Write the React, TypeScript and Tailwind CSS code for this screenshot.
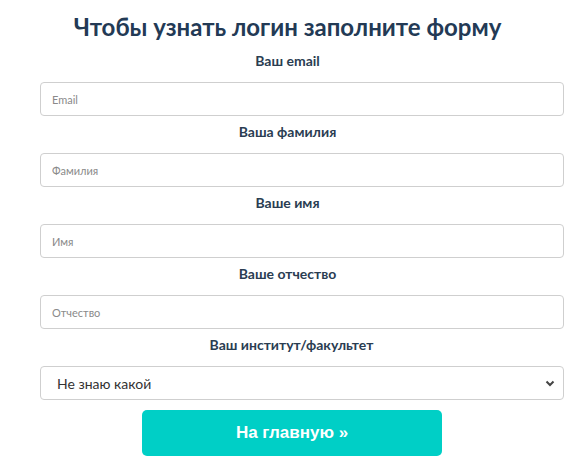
import React from "react";

const Label = ({ children, className = "" }: { children: React.ReactNode; className?: string }) => (
  <div className={`text-center text-[14px] leading-[20px] font-bold text-[#2a3d52] ${className}`}>{children}</div>
);

const Field = ({ placeholder, className = "" }: { placeholder: string; className?: string }) => (
  <input
    placeholder={placeholder}
    className={`block ml-[40px] w-[524px] h-[34px] rounded-[4px] border border-[#cfcfcf] bg-white px-[11px] text-[11px] text-[#555] placeholder:text-[#8a8a8a] outline-none ${className}`}
  />
);

export default function App() {
  return (
    <div className="w-[583px] h-[468px] bg-white overflow-hidden" style={{ fontFamily: "Lato, 'Noto Sans', sans-serif" }}>
      <h1 className="pt-[11px] text-center text-[24px] leading-[32px] font-bold text-[#233a55] pr-[8px]">
        Чтобы узнать логин заполните форму
      </h1>
      <Label className="mt-[8px] pr-[8px]">Ваш email</Label>
      <Field placeholder="Email" className="mt-[11px]" />
      <Label className="mt-[6px] pr-[8px]">Ваша фамилия</Label>
      <Field placeholder="Фамилия" className="mt-[11px]" />
      <Label className="mt-[6px] pr-[8px]">Ваше имя</Label>
      <Field placeholder="Имя" className="mt-[11px]" />
      <Label className="mt-[6px] pr-[8px]">Ваше отчество</Label>
      <Field placeholder="Отчество" className="mt-[11px]" />
      <Label className="mt-[6px]">Ваш институт/факультет</Label>
      <div className="relative ml-[40px] mt-[11px] w-[524px] h-[34px] rounded-[4px] border border-[#cfcfcf] bg-white flex items-center px-[16px] text-[14px] text-[#333]">
        Не знаю какой
        <svg className="absolute right-[8px] top-[13px]" width="10" height="7" viewBox="0 0 10 7">
          <path d="M1.5 1.5 L5 5 L8.5 1.5" fill="none" stroke="#444" strokeWidth="2" />
        </svg>
      </div>
      <div className="flex justify-center mt-[10px]">
        <button
          className="ml-[1px] w-[300px] h-[46px] rounded-[5px] bg-[#00cfc6] text-white text-[17px] font-bold"
          style={{ fontFamily: "'Liberation Sans', Arial, sans-serif" }}
        >
          На главную »
        </button>
      </div>
    </div>
  );
}
